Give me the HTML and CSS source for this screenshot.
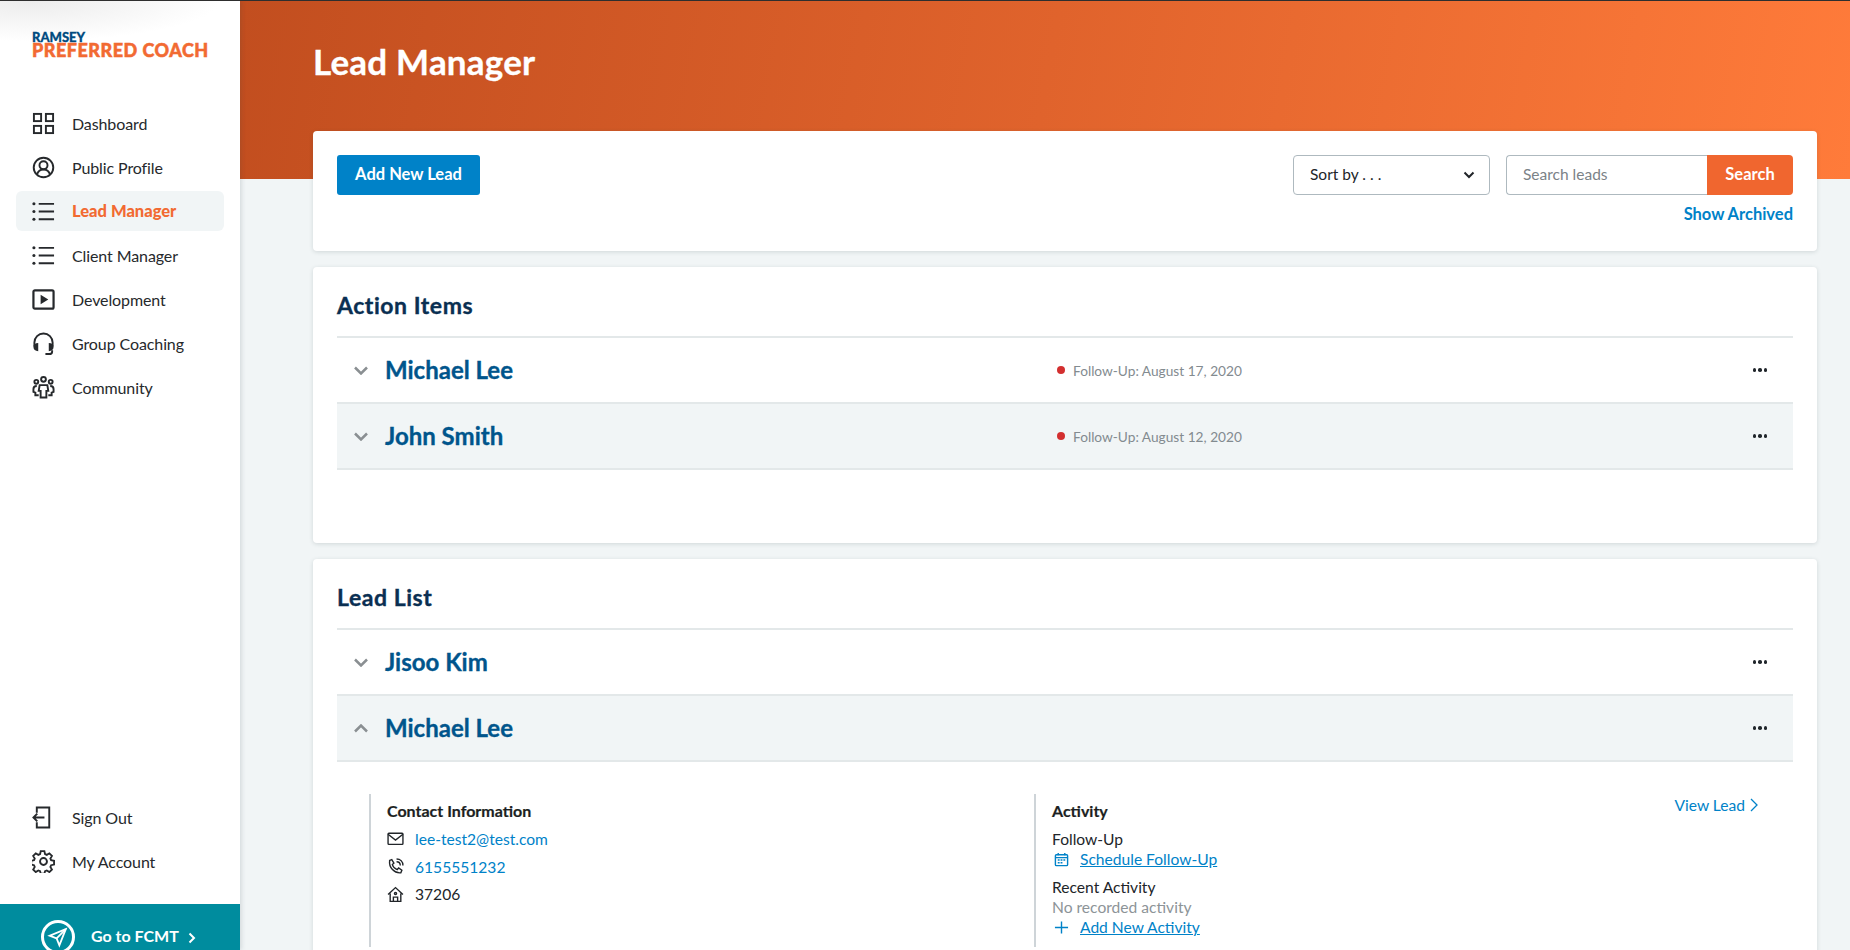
FILE: index.html
```html
<!DOCTYPE html>
<html lang="en">
<head>
  <meta charset="UTF-8">
  <meta name="viewport" content="width=device-width, initial-scale=1.0">
  <title>Lead Manager</title>
  <link rel="stylesheet" href="styles.css">
</head>
<body>
  <div class="app">
    <aside class="sidebar">
      <div class="logo">
        <span class="logo-top">RAMSEY</span>
        <span class="logo-main">PREFERRED COACH</span>
      </div>

      <nav class="nav">
        <a class="nav-item">
          <svg class="nav-icon" viewBox="0 0 24 24"><rect x="2" y="2" width="7.5" height="7.5"/><rect x="14.5" y="2" width="7.5" height="7.5"/><rect x="2" y="14.5" width="7.5" height="7.5"/><rect x="14.5" y="14.5" width="7.5" height="7.5"/></svg>
          Dashboard
        </a>
        <a class="nav-item">
          <svg class="nav-icon" viewBox="0 0 24 24"><circle cx="12" cy="12" r="10.2"/><circle cx="12" cy="9.6" r="4.2"/><path d="M5.2 19.4c1-3.4 3.4-5.4 6.8-5.4s5.800 2 6.800 5.400"/></svg>
          Public Profile
        </a>
        <a class="nav-item active">
          <svg class="nav-icon" viewBox="0 0 24 24"><path d="M7 4h16M7 12h16M7 20h16"/><circle class="fill" cx="2" cy="4" r="1.6"/><circle class="fill" cx="2" cy="12" r="1.6"/><circle class="fill" cx="2" cy="20" r="1.6"/></svg>
          Lead Manager
        </a>
        <a class="nav-item">
          <svg class="nav-icon" viewBox="0 0 24 24"><path d="M7 4h16M7 12h16M7 20h16"/><circle class="fill" cx="2" cy="4" r="1.6"/><circle class="fill" cx="2" cy="12" r="1.6"/><circle class="fill" cx="2" cy="20" r="1.6"/></svg>
          Client Manager
        </a>
        <a class="nav-item">
          <svg class="nav-icon heavy" viewBox="0 0 24 24"><rect x="1.5" y="2.5" width="21" height="19" rx="1.5"/><path class="fill" d="M9 7l8 5-8 5z"/></svg>
          Development
        </a>
        <a class="nav-item">
          <svg class="nav-icon" viewBox="0 0 24 24"><path d="M2.500 15v-4a9.500 9.500 0 0 1 19 0v4"/><path class="fill" d="M6.500 11.500v8.500C3.500 20 1.500 18.500 1.500 15.700S3.500 11.500 6.500 11.500zM17.500 11.500v8.500c3 0 5-1.500 5-4.300s-2-4.200-5-4.200z"/><path d="M21 19v1.500c0 1.500-1.500 2.500-3 2.500h-4"/></svg>
          Group Coaching
        </a>
        <a class="nav-item">
          <svg class="nav-icon" viewBox="0 0 24 24"><circle cx="12" cy="3.500" r="2.500"/><circle cx="4.500" cy="6" r="2"/><circle cx="19.500" cy="6" r="2"/><path d="M8 9.500h8l1 6h-2v7H9v-7H7z"/><path d="M5 10.500c-2 0-3.500 1-3.500 3v3l2 .8v2.700H7M19 10.500c2 0 3.500 1 3.500 3v3l-2 .8v2.700H17"/></svg>
          Community
        </a>
      </nav>

      <nav class="nav nav-bottom">
        <a class="nav-item">
          <svg class="nav-icon" viewBox="0 0 24 24"><path d="M5 7V1.500h13v21H5V17"/><path d="M13 12H1.500M5.500 8l-4 4 4 4"/></svg>
          Sign Out
        </a>
        <a class="nav-item">
          <svg class="nav-icon" viewBox="0 0 24 24"><circle cx="12" cy="12" r="3.600"/><path d="M10 1.500h4l.7 3.200 1.900.8 2.800-1.700 2.800 2.800-1.700 2.800.8 1.900 3.200.7v4l-3.200.7-.8 1.900 1.700 2.800-2.800 2.800-2.800-1.700-1.900.8-.7 2.700h-4l-.7-2.700-1.900-.8-2.800 1.700-2.800-2.800 1.700-2.800-.8-1.900-3-.7v-4l3-.7.8-1.900-1.700-2.800 2.800-2.800 2.800 1.700 1.900-.8z" transform="translate(-.5 -.2) scale(.96)"/></svg>
          My Account
        </a>
      </nav>

      <a class="fcmt">
        <span class="fcmt-badge">
          <svg viewBox="0 0 24 24" width="22" height="22"><path d="M20.500 3.500L3 10.500l7.500 3L13.500 21z"/><path d="M20.500 3.500l-10 10"/></svg>
        </span>
        Go to FCMT
        <svg class="fcmt-arrow" viewBox="0 0 8 12" width="8" height="12"><path d="M1.500 1.500L6 6l-4.500 4.500"/></svg>
      </a>
    </aside>

    <main class="main">
      <header class="banner">
        <h1>Lead Manager</h1>
      </header>

      <div class="content">
        <section class="card toolbar">
          <button class="btn-primary">Add New Lead</button>
          <div class="toolbar-right">
            <div class="toolbar-controls">
              <div class="sort">
                Sort by . . .
                <svg viewBox="0 0 12 8" width="12" height="8"><path d="M1.500 1.500L6 6l4.500-4.500"/></svg>
              </div>
              <div class="search">
                <input type="text" placeholder="Search leads">
                <button>Search</button>
              </div>
            </div>
            <a class="show-archived">Show Archived</a>
          </div>
        </section>

        <section class="card list action-items">
          <h2>Action Items</h2>
          <div class="row">
            <svg class="chev" viewBox="0 0 14 9"><path d="M1 1.500l6 6 6-6"/></svg>
            <a class="name">Michael Lee</a>
            <div class="followup"><i class="dot"></i>Follow-Up: August 17, 2020</div>
            <div class="more"><i></i><i></i><i></i></div>
          </div>
          <div class="row shaded">
            <svg class="chev" viewBox="0 0 14 9"><path d="M1 1.500l6 6 6-6"/></svg>
            <a class="name">John Smith</a>
            <div class="followup"><i class="dot"></i>Follow-Up: August 12, 2020</div>
            <div class="more"><i></i><i></i><i></i></div>
          </div>
        </section>

        <section class="card list lead-list">
          <h2>Lead List</h2>
          <div class="row">
            <svg class="chev" viewBox="0 0 14 9"><path d="M1 1.500l6 6 6-6"/></svg>
            <a class="name">Jisoo Kim</a>
            <div class="more"><i></i><i></i><i></i></div>
          </div>
          <div class="row shaded">
            <svg class="chev" viewBox="0 0 14 9"><path d="M1 7.500l6-6 6 6"/></svg>
            <a class="name">Michael Lee</a>
            <div class="more"><i></i><i></i><i></i></div>
          </div>

          <div class="details">
            <div class="col col-contact">
              <h3>Contact Information</h3>
              <div class="contact-line">
                <svg viewBox="0 0 16 16"><rect x="1" y="3" width="14" height="10.500" rx=".8"/><path d="M1 4l7 5.500L15 4"/></svg>
                <a>lee-test2@test.com</a>
              </div>
              <div class="contact-line">
                <svg viewBox="0 0 16 16"><path d="M2 2.500L4.500 1.500l2 3.300-1.500 1.400c.6 2 2.400 3.900 4.600 4.700l1.400-1.500 3 2.100-1 2.500c-6 .6-11.500-5-10.500-11.500z"/><path d="M9 3.500c2 0 3.500 1.500 3.500 3.500M9 1c3.500 0 6 2.500 6 6"/></svg>
                <a>6155551232</a>
              </div>
              <div class="contact-line">
                <svg viewBox="0 0 16 16"><path d="M1 8l7-6.500L15 8M3 7v7.500h10V7"/><path d="M6 14.500V10.500h4v4"/><circle cx="8" cy="7" r="1"/></svg>
                37206
              </div>
            </div>
            <div class="col col-activity">
              <h3>Activity</h3>
              <div class="activity-label">Follow-Up</div>
              <div class="activity-link">
                <svg viewBox="0 0 16 16"><rect x="1.500" y="3" width="13" height="11.500" rx="1"/><path d="M1.500 6h13M4.500 1v2.500M11.500 1v2.500"/><path d="M4 8.500h2M7 8.500h2M10 8.500h2M4 11.500h2M7 11.500h2"/></svg>
                <a>Schedule Follow-Up</a>
              </div>
              <div class="activity-label second">Recent Activity</div>
              <div class="activity-none">No recorded activity</div>
              <div class="activity-link">
                <svg viewBox="0 0 16 16"><path d="M8 1.500v13M1 8h14"/></svg>
                <a>Add New Activity</a>
              </div>
            </div>
            <a class="view-lead">View Lead
              <svg viewBox="0 0 8 14" width="8" height="14"><path d="M1 1l6 6-6 6"/></svg>
            </a>
          </div>
        </section>
      </div>
    </main>
  </div>
</body>
</html>
```

FILE: styles.css
```css
* {
  box-sizing: border-box;
}
html, body {
  height: 100%;
}
body {
  margin: 0;
  overflow: hidden;
  background-color: #f1f5f6;
  color: #212529;
  font-family: "Lato", "Noto Sans", sans-serif;
  font-size: 16px;
}
a {
  text-decoration: none;
}
svg {
  display: block;
  fill: none;
  stroke: currentColor;
}
.app {
  display: flex;
  height: 950px;
  overflow: hidden;
  border-top: 1px solid #2e2e2e;
}

/* sidebar */
.sidebar {
  display: flex;
  flex-direction: column;
  flex: none;
  width: 240px;
  background: radial-gradient(ellipse 190px 40px at 30px 0, #ececec, #ffffff);
  box-shadow: 1px 0 5px rgba(40, 60, 70, 0.18);
  position: relative;
  z-index: 2;
}
.logo {
  display: flex;
  flex-direction: column;
  margin: 31px 0 0 32px;
  height: 71px;
  font-weight: 900;
  line-height: 1;
}
.logo-top {
  color: #004b7f;
  font-size: 13px;
  line-height: 11px;
  -webkit-text-stroke: 0.3px #004b7f;
}
.logo-main {
  color: #f26a32;
  font-size: 18px;
  line-height: 15px;
  letter-spacing: 0.5px;
  white-space: nowrap;
  -webkit-text-stroke: 0.5px #f26a32;
}
.nav {
  display: flex;
  flex-direction: column;
  gap: 4px;
  padding: 0 16px;
}
.nav-bottom {
  margin-top: auto;
}
.nav-item {
  display: flex;
  align-items: center;
  gap: 17px;
  height: 40px;
  padding-left: 16px;
  border-radius: 6px;
  color: #26292c;
  font-size: 16px;
  letter-spacing: -0.1px;
}
.nav-item.active {
  background-color: #f1f5f6;
  color: #f26a32;
  font-size: 16.500px;
  font-weight: 900;
  letter-spacing: 0;
}
.nav-icon {
  flex: none;
  width: 23px;
  height: 23px;
  color: #26292c;
  stroke-width: 2;
}
.nav-icon.heavy {
  stroke-width: 2.300;
}
.nav-icon .fill {
  fill: currentColor;
  stroke: none;
}
.fcmt {
  display: flex;
  align-items: flex-start;
  height: 46px;
  margin-top: 23px;
  padding: 16px 0 0 41px;
  background-color: #008c9e;
  color: #ffffff;
  font-weight: 700;
  font-size: 16px;
  line-height: 32px;
}
.fcmt-badge {
  display: flex;
  align-items: center;
  justify-content: center;
  flex: none;
  width: 34px;
  height: 34px;
  margin-right: 16px;
  border: 3px solid #ffffff;
  border-radius: 50%;
  background-color: #008c9e;
  color: #ffffff;
  stroke-width: 2;
}
.fcmt-arrow {
  margin: 12px 0 0 9px;
  stroke-width: 2;
}

/* main */
.main {
  flex: 1;
  min-width: 0;
}
.banner {
  height: 178px;
  padding: 40px 0 0 73px;
  background: linear-gradient(100deg, #c24e1f 0%, #e0632c 50%, #ff7b3a 100%);
}
.banner h1 {
  margin: 0;
  color: #ffffff;
  font-size: 35px;
  font-weight: 700;
  line-height: 40px;
  letter-spacing: 0.2px;
  -webkit-text-stroke: 0.3px #ffffff;
}
.content {
  display: flex;
  flex-direction: column;
  gap: 16px;
  margin: -48px 33px 0 73px;
}
.card {
  background-color: #ffffff;
  border-radius: 4px;
  box-shadow: 0 1px 4px rgba(40, 60, 70, 0.16);
}
.toolbar {
  display: flex;
  justify-content: space-between;
  align-items: flex-start;
  height: 120px;
  padding: 24px;
}
.btn-primary {
  width: 143px;
  height: 40px;
  padding: 0 0 3px;
  border: 0;
  border-radius: 3px;
  background-color: #0082c8;
  color: #ffffff;
  font: 700 16.500px "Lato", sans-serif;
}
.toolbar-right {
  display: flex;
  flex-direction: column;
  align-items: flex-end;
}
.toolbar-controls {
  display: flex;
  gap: 16px;
}
.sort {
  display: flex;
  justify-content: space-between;
  align-items: center;
  width: 197px;
  height: 40px;
  padding: 0 14px 3px 16px;
  border: 1px solid #aeb9bf;
  border-radius: 4px;
  font-size: 15.500px;
}
.sort svg {
  margin-top: 2px;
  stroke-width: 2;
}
.search {
  display: flex;
}
.search input {
  width: 201px;
  height: 40px;
  padding: 0 16px 2px;
  border: 1px solid #aeb9bf;
  border-right: 0;
  border-radius: 4px 0 0 4px;
  font: 15.500px "Lato", sans-serif;
  outline: none;
}
.search input::placeholder {
  color: #7b8287;
}
.search button {
  width: 86px;
  height: 40px;
  padding: 0 0 3px;
  border: 0;
  border-radius: 0 4px 4px 0;
  background-color: #f0662f;
  color: #ffffff;
  font: 700 16.500px "Lato", sans-serif;
}
.show-archived {
  margin-top: 10px;
  color: #0082c8;
  font-weight: 700;
  font-size: 16.500px;
  line-height: 18px;
}

/* lists */
.list {
  padding: 0 24px;
}
.action-items {
  height: 276px;
}
.lead-list {
  padding-bottom: 60px;
}
.list h2 {
  margin: 0;
  height: 71px;
  padding-top: 23px;
  border-bottom: 2px solid #e3e8e9;
  color: #0a2f52;
  font-size: 23px;
  font-weight: 700;
  line-height: 30px;
  letter-spacing: 0.55px;
  -webkit-text-stroke: 0.35px #0a2f52;
}
.row {
  display: flex;
  align-items: center;
  height: 66px;
  padding-right: 26px;
  border-bottom: 2px solid #e3e8e9;
}
.row.shaded {
  background-color: #f1f5f6;
}
.chev {
  flex: none;
  width: 14px;
  height: 9px;
  margin: 0 17px 0 17px;
  color: #8a8f92;
  stroke-width: 2.500;
}
.name {
  color: #00558c;
  font-size: 24px;
  font-weight: 700;
  -webkit-text-stroke: 0.35px #00558c;
  position: relative;
  top: -1px;
}
.followup {
  display: flex;
  align-items: center;
  position: absolute;
  left: 1057px;
  color: #838b90;
  font-size: 13.700px;
}
.dot {
  width: 8px;
  height: 8px;
  margin-right: 8px;
  border-radius: 50%;
  background-color: #d32f2f;
}
.more {
  display: flex;
  gap: 2px;
  margin-left: auto;
}
.more i {
  width: 3.500px;
  height: 3.500px;
  border-radius: 50%;
  background-color: #20262b;
}

/* expanded lead */
.details {
  display: flex;
  position: relative;
  margin: 32px 0 0 32px;
  height: 153px;
}
.col {
  padding-left: 16px;
  border-left: 2px solid #ced4d8;
}
.col-contact {
  width: 665px;
}
.col h3 {
  margin: 0;
  padding-top: 7px;
  color: #1c1f22;
  font-size: 16px;
  font-weight: 700;
  line-height: 20px;
  -webkit-text-stroke: 0.2px #1c1f22;
}
.col-contact h3 {
  margin-bottom: 4px;
}
.col-activity h3 {
  margin-bottom: 8px;
}
.contact-line {
  display: flex;
  align-items: center;
  gap: 11px;
  height: 27.700px;
  font-size: 15.600px;
}
.contact-line svg {
  width: 17px;
  height: 17px;
  stroke-width: 1.300;
}
.contact-line a, .activity-link a, .view-lead {
  color: #0082c8;
}
.activity-label {
  font-size: 15.600px;
  line-height: 20px;
}
.activity-label.second {
  margin-top: 8px;
}
.activity-none {
  color: #8d9498;
  font-size: 15.600px;
  line-height: 20px;
}
.activity-link {
  display: flex;
  align-items: center;
  gap: 11px;
  padding-left: 2px;
  color: #0082c8;
  font-size: 15.600px;
  line-height: 20px;
}
.activity-link svg {
  width: 15px;
  height: 15px;
  stroke-width: 1.500;
}
.activity-link a {
  text-decoration: underline;
}
.view-lead {
  display: flex;
  align-items: center;
  gap: 5px;
  position: absolute;
  right: 35px;
  top: 2px;
  font-size: 15.600px;
  stroke-width: 1.300;
}
```
